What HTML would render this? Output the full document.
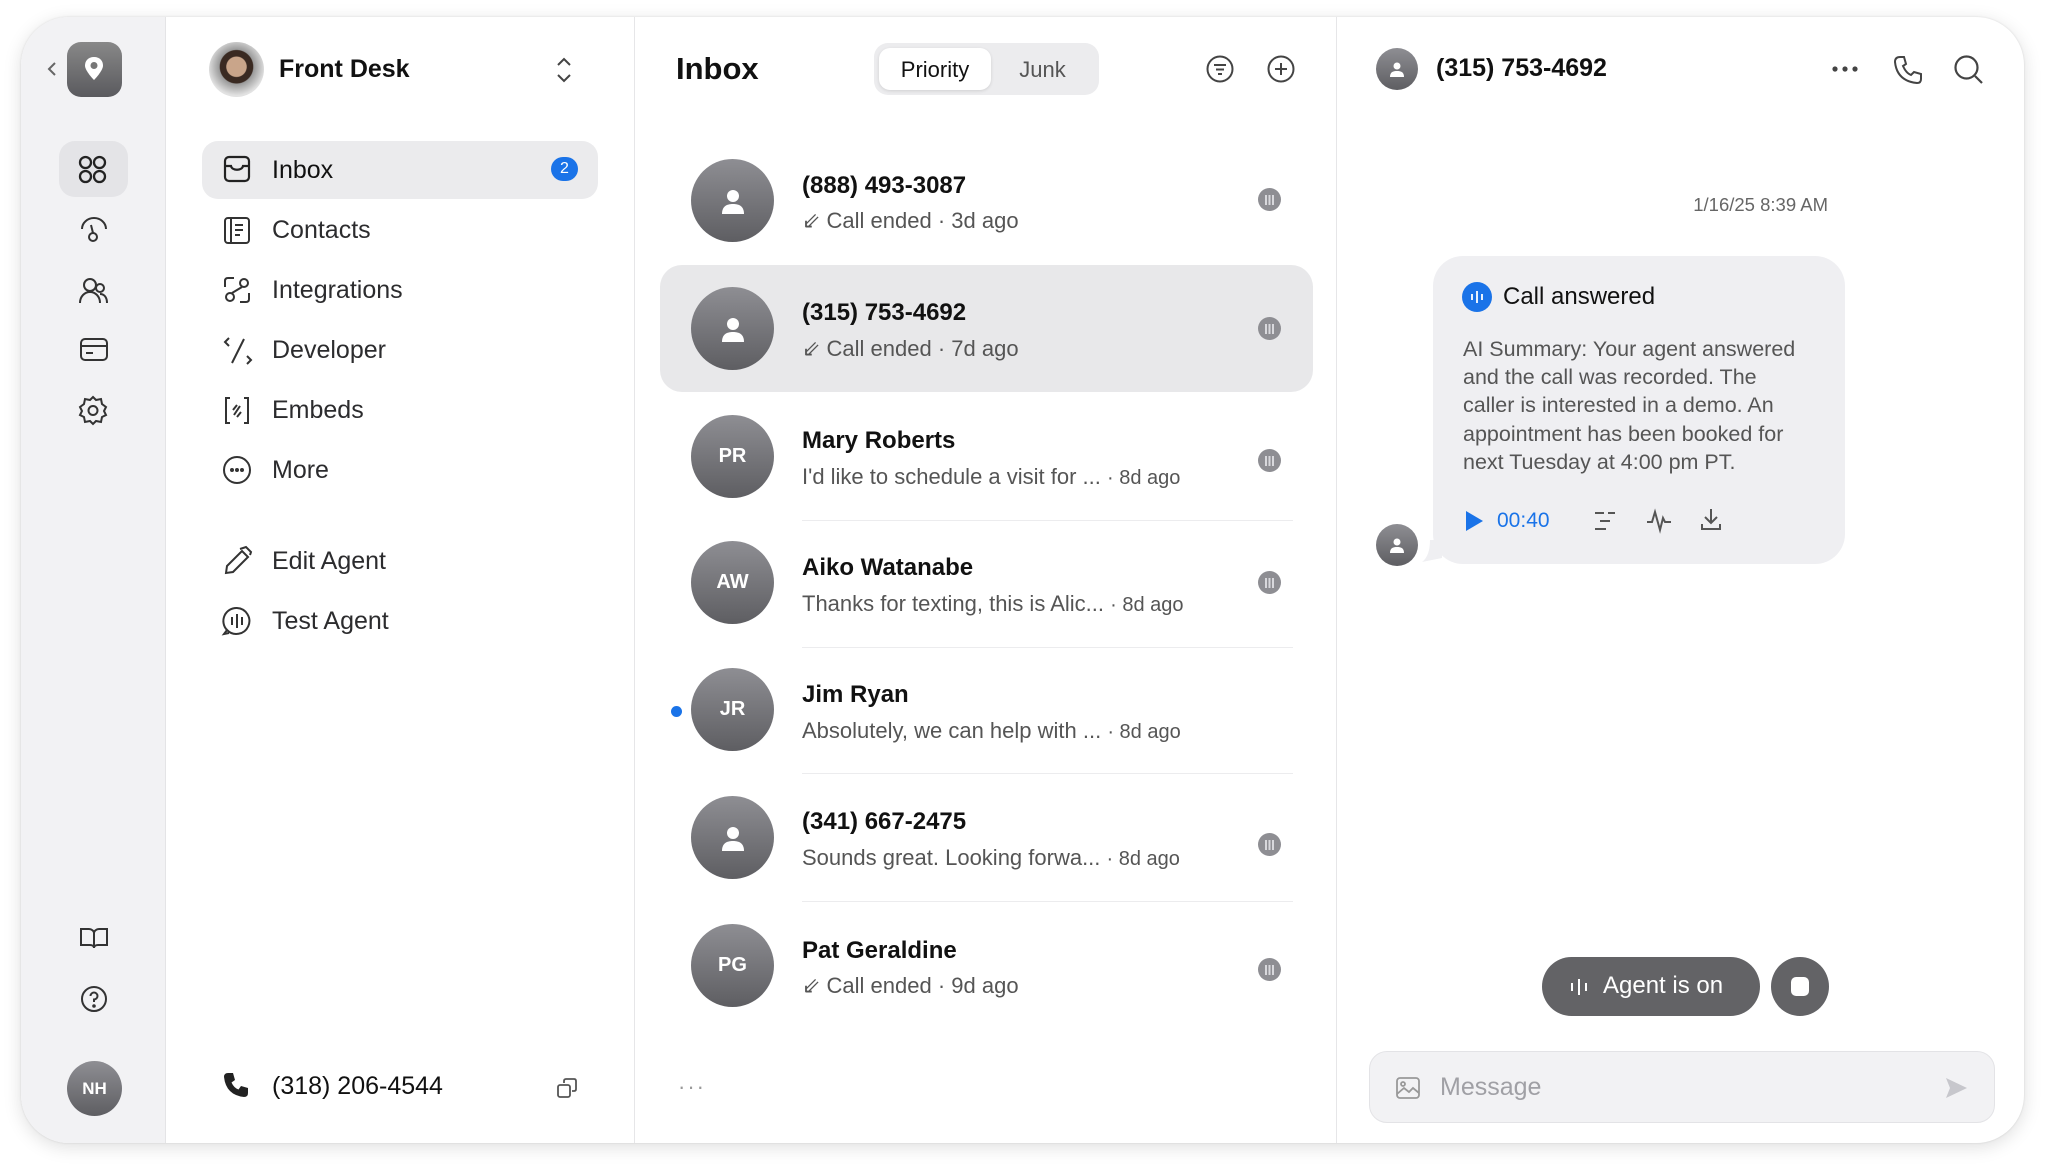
<!DOCTYPE html>
<html><head><meta charset="utf-8"><style>
*{box-sizing:border-box;margin:0;padding:0}
body{width:2048px;height:1172px;background:#fff;font-family:"Liberation Sans",sans-serif;color:#1c1c1e;position:relative;overflow:hidden}
.a{position:absolute}
.win{left:21px;top:17px;width:2003px;height:1126px;border-radius:48px;background:#fff;box-shadow:0 4px 18px rgba(0,0,0,.13),0 0 2px rgba(0,0,0,.12);overflow:hidden}
.rail{left:0;top:0;width:145px;height:1126px;background:#f2f2f4;border-right:1px solid #e4e4e6}
.nav{left:145px;top:0;width:469px;height:1126px;border-right:1px solid #e6e6e8}
.list{left:614px;top:0;width:702px;height:1126px;border-right:1px solid #e6e6e8}
svg{position:absolute;overflow:visible}
.ni{font-size:25px;color:#2c2c2e}
.name{font-size:24px;font-weight:bold;color:#111}
.sub{font-size:22px;color:#555}
.av{border-radius:50%;background:linear-gradient(#8e8e93,#5e5e62);color:#fff;font-weight:bold;font-size:20px;display:flex;align-items:center;justify-content:center}
.mic{width:23px;height:23px;border-radius:50%;background:#8e8e93;display:flex;align-items:center;justify-content:center}
.mic::after{content:"";width:9px;height:10px;background:linear-gradient(90deg,#d8d8dc 0 2px,transparent 2px 3.5px,#d8d8dc 3.5px 5.5px,transparent 5.5px 7px,#d8d8dc 7px 9px)}
.div{height:1px;background:#ececee;left:802px;width:491px}
</style></head><body>
<div class="a win">
 <div class="a rail"></div>
 <div class="a nav"></div>
 <div class="a list"></div>
</div>

<!-- rail -->
<svg style="left:45px;top:61px" width="14" height="16"><path d="M10 2 L4 8 L10 14" stroke="#666" stroke-width="2" fill="none"/></svg>
<div class="a" style="left:67px;top:42px;width:55px;height:55px;border-radius:14px;background:linear-gradient(#888,#5a5a5e)"></div>
<svg style="left:80px;top:54px" width="28" height="30"><path d="M14 3C8 3 5 7 5 11.5C5 17 14 26 14 26S23 17 23 11.5C23 7 20 3 14 3Z" fill="#fff"/><circle cx="14" cy="11.5" r="3.5" fill="#777"/></svg>
<div class="a" style="left:59px;top:141px;width:69px;height:56px;border-radius:16px;background:#e4e4e7"></div>
<svg style="left:78px;top:155px" width="30" height="30" fill="none" stroke="#222" stroke-width="2.3"><circle cx="7.5" cy="7.5" r="5.5"/><circle cx="21.5" cy="7.5" r="5.5"/><circle cx="7.5" cy="21.5" r="5.5"/><circle cx="21.5" cy="21.5" r="5.5"/></svg>
<svg style="left:79px;top:216px" width="30" height="30" fill="none" stroke="#333" stroke-width="2"><path d="M3 13A12 11 0 0 1 27 13"/><circle cx="14" cy="21" r="4"/><path d="M14 17 L12 9"/></svg>
<svg style="left:79px;top:276px" width="30" height="30" fill="none" stroke="#333" stroke-width="2"><circle cx="11" cy="9" r="6"/><path d="M1 27C1 20 6 16 11 16S21 20 21 27"/><circle cx="21" cy="12" r="4"/><path d="M21 18C25 18 28 21 28 27"/></svg>
<svg style="left:79px;top:337px" width="30" height="26" fill="none" stroke="#333" stroke-width="2"><rect x="2" y="2" width="26" height="21" rx="4"/><path d="M2 9H28M7 16H14"/></svg>
<svg style="left:78px;top:395px" width="30" height="30" fill="none" stroke="#333" stroke-width="2"><path d="M15 2L18 5L23 4L24 9L28 12L26 16L28 20L24 22L23 27L18 26L15 29L12 26L7 27L6 22L2 20L4 16L2 12L6 9L7 4L12 5Z"/><circle cx="15" cy="15.5" r="4.5"/></svg>
<svg style="left:79px;top:926px" width="30" height="24" fill="none" stroke="#333" stroke-width="2"><path d="M2 3H10C12.5 3 15 5 15 7V22C15 20 13 19 11 19H2Z M28 3H20C17.5 3 15 5 15 7V22C15 20 17 19 19 19H28Z"/></svg>
<svg style="left:80px;top:985px" width="28" height="28" fill="none" stroke="#333" stroke-width="2"><circle cx="14" cy="14" r="12"/><path d="M10.5 11A3.5 3.5 0 1 1 14 14.5V17"/><circle cx="14" cy="21" r="0.8" fill="#333"/></svg>
<div class="a av" style="left:67px;top:1061px;width:55px;height:55px;font-size:17px">NH</div>

<!-- nav -->
<div class="a" style="left:209px;top:42px;width:55px;height:55px;border-radius:50%;background:radial-gradient(circle at 50% 45%,#c9a58a 0 24%,#3a2a22 26% 40%,#9a9a9a 42%,#e2e2e2 70%)"></div>
<div class="a" style="left:279px;top:55px;font-size:25px;font-weight:bold;color:#111">Front Desk</div>
<svg style="left:556px;top:56px" width="16" height="28" fill="none" stroke="#444" stroke-width="2"><path d="M2 9L8 3L14 9M2 19L8 25L14 19"/></svg>
<div class="a" style="left:202px;top:141px;width:396px;height:58px;border-radius:16px;background:#ebebed"></div>
<svg style="left:223px;top:155px" width="28" height="28" fill="none" stroke="#222" stroke-width="2.2"><rect x="2" y="2" width="24" height="24" rx="4"/><path d="M2 11H8C9 16 19 16 20 11H26"/></svg>
<div class="a ni" style="left:272px;top:156px;color:#111">Inbox</div>
<div class="a" style="left:551px;top:157px;width:27px;height:24px;border-radius:12px;background:#1a73e8;color:#fff;font-size:16px;text-align:center;line-height:24px">2</div>
<svg style="left:223px;top:216px" width="28" height="28" fill="none" stroke="#333" stroke-width="2"><rect x="2" y="2" width="24" height="25" rx="3"/><path d="M8 2V27M12 9H20M12 14H20M12 19H17"/></svg>
<div class="a ni" style="left:272px;top:216px">Contacts</div>
<svg style="left:223px;top:276px" width="28" height="28" fill="none" stroke="#333" stroke-width="2"><circle cx="21" cy="7" r="4"/><circle cx="7" cy="21" r="4"/><path d="M2 11V5Q2 2 5 2H11M26 17V23Q26 26 23 26H17M19 11L9 17"/></svg>
<div class="a ni" style="left:272px;top:276px">Integrations</div>
<svg style="left:222px;top:336px" width="32" height="30" fill="none" stroke="#333" stroke-width="2"><path d="M7 2L3 6L7 10M25 20L29 24L25 28M22 3L10 27"/></svg>
<div class="a ni" style="left:272px;top:336px">Developer</div>
<svg style="left:223px;top:396px" width="28" height="30" fill="none" stroke="#333" stroke-width="2"><path d="M7 2H3V27H7M21 2H25V27H21M10 14L14 9M14 21L18 16M17 10L11 19"/></svg>
<div class="a ni" style="left:272px;top:396px">Embeds</div>
<svg style="left:222px;top:455px" width="30" height="30" fill="none" stroke="#333" stroke-width="2"><circle cx="15" cy="15" r="13"/><circle cx="10" cy="15" r="1" fill="#333"/><circle cx="15" cy="15" r="1" fill="#333"/><circle cx="20" cy="15" r="1" fill="#333"/></svg>
<div class="a ni" style="left:272px;top:456px">More</div>
<svg style="left:222px;top:545px" width="32" height="32" fill="none" stroke="#333" stroke-width="2"><path d="M4 28L5 21L20 6L26 12L11 27Z M18 4L24 2L29 7L28 10"/></svg>
<div class="a ni" style="left:272px;top:547px">Edit Agent</div>
<svg style="left:222px;top:606px" width="30" height="30" fill="none" stroke="#333" stroke-width="2"><path d="M15 2A13 13 0 1 1 5 24L2 28L7 27"/><path d="M15 2A13 13 0 0 0 5 24"/><path d="M10 11V19M15 8V22M20 11V19"/></svg>
<div class="a ni" style="left:272px;top:607px">Test Agent</div>
<svg style="left:222px;top:1071px" width="28" height="28"><path d="M6 2L11 2L13 9L9.5 11.5Q12 17 16.5 18.5L19 15L26 17V22Q26 26 22 26Q4 24 2 6Q2 2 6 2Z" fill="#222"/></svg>
<div class="a ni" style="left:272px;top:1072px;color:#111">(318) 206-4544</div>
<svg style="left:557px;top:1078px" width="20" height="20" fill="none" stroke="#555" stroke-width="1.8"><rect x="1" y="7" width="12" height="12" rx="2"/><path d="M7 5V3Q7 1 9 1H17Q19 1 19 3V11Q19 13 17 13H15"/></svg>

<!-- list -->
<div class="a" style="left:676px;top:51px;font-size:31px;font-weight:bold;color:#111">Inbox</div>
<div class="a" style="left:874px;top:43px;width:225px;height:52px;border-radius:14px;background:#ececee"></div>
<div class="a" style="left:879px;top:48px;width:112px;height:42px;border-radius:11px;background:#fff;box-shadow:0 1px 3px rgba(0,0,0,.12)"></div>
<div class="a" style="left:879px;top:57px;width:112px;text-align:center;font-size:22px;color:#111">Priority</div>
<div class="a" style="left:991px;top:57px;width:103px;text-align:center;font-size:22px;color:#555">Junk</div>
<svg style="left:1206px;top:55px" width="28" height="28" fill="none" stroke="#444" stroke-width="2"><circle cx="14" cy="14" r="12.5"/><path d="M8 10H20M10 14.5H18M12 19H16"/></svg>
<svg style="left:1267px;top:55px" width="28" height="28" fill="none" stroke="#444" stroke-width="2"><circle cx="14" cy="14" r="12.5"/><path d="M14 8V20M8 14H20"/></svg>

<div class="a" style="left:660px;top:265px;width:653px;height:127px;border-radius:22px;background:#e8e8ea"></div>
<div class="a div" style="top:520px"></div><div class="a div" style="top:647px"></div><div class="a div" style="top:773px"></div><div class="a div" style="top:901px"></div>

<div class="a av" style="left:691px;top:159px;width:83px;height:83px"><svg style="position:static" width="28" height="26"><circle cx="14" cy="8" r="6" fill="#fff"/><path d="M3 26C3 18 8 16 14 16S25 18 25 26Z" fill="#fff"/></svg></div>
<div class="a name" style="left:802px;top:172px">(888) 493-3087</div>
<div class="a sub" style="left:802px;top:208px">⇙ Call ended · 3d ago</div>
<div class="a av" style="left:691px;top:287px;width:83px;height:83px"><svg style="position:static" width="28" height="26"><circle cx="14" cy="8" r="6" fill="#fff"/><path d="M3 26C3 18 8 16 14 16S25 18 25 26Z" fill="#fff"/></svg></div>
<div class="a name" style="left:802px;top:299px">(315) 753-4692</div>
<div class="a sub" style="left:802px;top:336px">⇙ Call ended · 7d ago</div>
<div class="a av" style="left:691px;top:415px;width:83px;height:83px">PR</div>
<div class="a name" style="left:802px;top:427px">Mary Roberts</div>
<div class="a sub" style="left:802px;top:464px">I'd like to schedule a visit for ... <span style="font-size:20px">· 8d ago</span></div>
<div class="a av" style="left:691px;top:541px;width:83px;height:83px">AW</div>
<div class="a name" style="left:802px;top:554px">Aiko Watanabe</div>
<div class="a sub" style="left:802px;top:591px">Thanks for texting, this is Alic... <span style="font-size:20px">· 8d ago</span></div>
<div class="a" style="left:671px;top:706px;width:11px;height:11px;border-radius:50%;background:#1a73e8"></div>
<div class="a av" style="left:691px;top:668px;width:83px;height:83px">JR</div>
<div class="a name" style="left:802px;top:681px">Jim Ryan</div>
<div class="a sub" style="left:802px;top:718px">Absolutely, we can help with ... <span style="font-size:20px">· 8d ago</span></div>
<div class="a av" style="left:691px;top:796px;width:83px;height:83px"><svg style="position:static" width="28" height="26"><circle cx="14" cy="8" r="6" fill="#fff"/><path d="M3 26C3 18 8 16 14 16S25 18 25 26Z" fill="#fff"/></svg></div>
<div class="a name" style="left:802px;top:808px">(341) 667-2475</div>
<div class="a sub" style="left:802px;top:845px">Sounds great. Looking forwa... <span style="font-size:20px">· 8d ago</span></div>
<div class="a av" style="left:691px;top:924px;width:83px;height:83px">PG</div>
<div class="a name" style="left:802px;top:937px">Pat Geraldine</div>
<div class="a sub" style="left:802px;top:973px">⇙ Call ended · 9d ago</div>
<div class="a mic" style="left:1258px;top:188px"></div><div class="a mic" style="left:1258px;top:317px"></div><div class="a mic" style="left:1258px;top:449px"></div><div class="a mic" style="left:1258px;top:571px"></div><div class="a mic" style="left:1258px;top:833px"></div><div class="a mic" style="left:1258px;top:958px"></div>
<div class="a" style="left:678px;top:1074px;font-size:22px;color:#999;letter-spacing:2px">···</div>

<!-- right -->
<div class="a av" style="left:1376px;top:48px;width:42px;height:42px"><svg style="position:static" width="16" height="16"><circle cx="8" cy="5" r="3.5" fill="#fff"/><path d="M1 16C1 11 4 10 8 10S15 11 15 16Z" fill="#fff"/></svg></div>
<div class="a" style="left:1436px;top:54px;font-size:25px;font-weight:bold;color:#111">(315) 753-4692</div>
<svg style="left:1832px;top:66px" width="26" height="6"><circle cx="3" cy="3" r="2.6" fill="#444"/><circle cx="13" cy="3" r="2.6" fill="#444"/><circle cx="23" cy="3" r="2.6" fill="#444"/></svg>
<svg style="left:1893px;top:55px" width="30" height="30" fill="none" stroke="#444" stroke-width="2"><path d="M7 2L11 2L13 9L10 11Q13 18 18 20L21 17L28 19V24Q28 28 24 28Q4 26 2 7Q2 2 7 2Z"/></svg>
<svg style="left:1954px;top:55px" width="30" height="30" fill="none" stroke="#444" stroke-width="2.2"><circle cx="12.5" cy="12.5" r="11"/><path d="M21 21L28 28"/></svg>
<div class="a" style="left:1580px;top:194px;width:248px;text-align:right;font-size:18.5px;color:#666">1/16/25 8:39 AM</div>
<div class="a" style="left:1433px;top:256px;width:412px;height:308px;border-radius:30px;background:#efeff2"></div>
<svg style="left:1418px;top:540px" width="24" height="24"><path d="M24 0V18L4 22Q12 16 12 0Z" fill="#efeff2"/></svg>
<div class="a" style="left:1462px;top:282px;width:30px;height:30px;border-radius:50%;background:#1a73e8"></div>
<svg style="left:1468px;top:289px" width="18" height="16" stroke="#fff" stroke-width="1.8"><path d="M4 5V11M9 2V14M14 5V11"/></svg>
<div class="a" style="left:1503px;top:283px;font-size:24px;color:#111">Call answered</div>
<div class="a" style="left:1463px;top:335px;width:350px;font-size:21.5px;line-height:28.2px;color:#555">AI Summary: Your agent answered and the call was recorded. The caller is interested in a demo. An appointment has been booked for next Tuesday at 4:00 pm PT.</div>
<svg style="left:1464px;top:510px" width="20" height="22"><path d="M2 1L19 11L2 21Z" fill="#1a73e8"/></svg>
<div class="a" style="left:1497px;top:509px;font-size:21px;color:#1a73e8">00:40</div>
<svg style="left:1594px;top:511px" width="22" height="20" fill="none" stroke="#555" stroke-width="2"><path d="M1 2H10M14 2H21M6 10H16M1 18H12"/></svg>
<svg style="left:1646px;top:510px" width="26" height="22" fill="none" stroke="#555" stroke-width="2"><path d="M1 12L6 12L9 2L14 20L17 8L19 12L25 12"/></svg>
<svg style="left:1700px;top:507px" width="22" height="24" fill="none" stroke="#555" stroke-width="2"><path d="M11 2V15M5 10L11 16L17 10M2 17V22H20V17"/></svg>
<div class="a av" style="left:1376px;top:524px;width:42px;height:42px"><svg style="position:static" width="16" height="16"><circle cx="8" cy="5" r="3.5" fill="#fff"/><path d="M1 16C1 11 4 10 8 10S15 11 15 16Z" fill="#fff"/></svg></div>

<div class="a" style="left:1542px;top:957px;width:218px;height:59px;border-radius:30px;background:#636366"></div>
<svg style="left:1569px;top:977px" width="20" height="20" stroke="#fff" stroke-width="2"><path d="M3 6V14M10 2V18M17 6V14"/></svg>
<div class="a" style="left:1603px;top:972px;font-size:24px;color:#fff">Agent is on</div>
<div class="a" style="left:1771px;top:957px;width:58px;height:59px;border-radius:50%;background:#636366"></div>
<div class="a" style="left:1791px;top:977px;width:18px;height:19px;border-radius:5px;background:#fff"></div>
<div class="a" style="left:1369px;top:1051px;width:626px;height:72px;border-radius:18px;background:#f2f2f4;border:1px solid #e3e3e6"></div>
<svg style="left:1396px;top:1077px" width="24" height="22" fill="none" stroke="#999" stroke-width="1.8"><rect x="1" y="1" width="22" height="20" rx="3"/><circle cx="7" cy="7" r="2"/><path d="M1 17L8 11L13 15L17 11L23 16"/></svg>
<div class="a" style="left:1440px;top:1073px;font-size:25px;color:#a0a0a5">Message</div>
<svg style="left:1945px;top:1077px" width="22" height="22"><path d="M1 1L22 11L1 21L5 11Z" fill="#c7c7cc"/></svg>
</body></html>
